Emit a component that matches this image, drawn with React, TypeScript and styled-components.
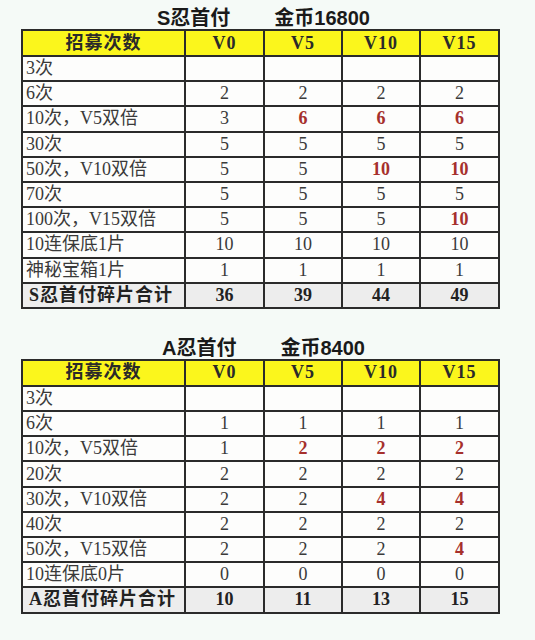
import styled, { createGlobalStyle } from "styled-components";

interface Row {
  label: string;
  values: string[];
  red?: number[];
}

interface Sheet {
  title: string;
  coins: string;
  rows: Row[];
  total: Row;
}

const levels = ["V0", "V5", "V10", "V15"];

const sheets: Sheet[] = [
  {
    title: "S忍首付",
    coins: "金币16800",
    rows: [
      { label: "3次", values: ["", "", "", ""] },
      { label: "6次", values: ["2", "2", "2", "2"] },
      { label: "10次，V5双倍", values: ["3", "6", "6", "6"], red: [1, 2, 3] },
      { label: "30次", values: ["5", "5", "5", "5"] },
      { label: "50次，V10双倍", values: ["5", "5", "10", "10"], red: [2, 3] },
      { label: "70次", values: ["5", "5", "5", "5"] },
      { label: "100次，V15双倍", values: ["5", "5", "5", "10"], red: [3] },
      { label: "10连保底1片", values: ["10", "10", "10", "10"] },
      { label: "神秘宝箱1片", values: ["1", "1", "1", "1"] }
    ],
    total: { label: "S忍首付碎片合计", values: ["36", "39", "44", "49"] }
  },
  {
    title: "A忍首付",
    coins: "金币8400",
    rows: [
      { label: "3次", values: ["", "", "", ""] },
      { label: "6次", values: ["1", "1", "1", "1"] },
      { label: "10次，V5双倍", values: ["1", "2", "2", "2"], red: [1, 2, 3] },
      { label: "20次", values: ["2", "2", "2", "2"] },
      { label: "30次，V10双倍", values: ["2", "2", "4", "4"], red: [2, 3] },
      { label: "40次", values: ["2", "2", "2", "2"] },
      { label: "50次，V15双倍", values: ["2", "2", "2", "4"], red: [3] },
      { label: "10连保底0片", values: ["0", "0", "0", "0"] }
    ],
    total: { label: "A忍首付碎片合计", values: ["10", "11", "13", "15"] }
  }
];

const App = () => {
  return (
    <>
      <GlobalStyle />
      <Page>
        {sheets.map((sheet) => (
          <Section key={sheet.title}>
            <Title>
              <span>{sheet.title}</span>
              <span>{sheet.coins}</span>
            </Title>
            <Table>
              <colgroup>
                <col style={{ width: 163 }} />
                <col style={{ width: 79 }} />
                <col style={{ width: 78 }} />
                <col style={{ width: 78 }} />
                <col style={{ width: 79 }} />
              </colgroup>
              <thead>
                <tr>
                  <HeadCell>招募次数</HeadCell>
                  {levels.map((lv) => (
                    <HeadCell key={lv}>{lv}</HeadCell>
                  ))}
                </tr>
              </thead>
              <tbody>
                {sheet.rows.map((row) => (
                  <tr key={row.label}>
                    <LabelCell>{row.label}</LabelCell>
                    {row.values.map((v, i) => (
                      <ValueCell key={i} $red={row.red?.includes(i)}>
                        {v}
                      </ValueCell>
                    ))}
                  </tr>
                ))}
                <tr>
                  <TotalLabel>{sheet.total.label}</TotalLabel>
                  {sheet.total.values.map((v, i) => (
                    <TotalCell key={i}>{v}</TotalCell>
                  ))}
                </tr>
              </tbody>
            </Table>
          </Section>
        ))}
      </Page>
    </>
  );
};

export default App;

const GlobalStyle = createGlobalStyle`
  html, body {
    margin: 0;
    background: #f5faf7;
  }
  body {
    font-family: "Liberation Serif", "Noto Sans CJK SC", serif;
    color: #333;
  }
`;

const Page = styled.div`
  width: 477px;
  padding: 4px 0 0 21px;
  display: flex;
  flex-direction: column;
  gap: 25px;
`;

const Section = styled.div`
  display: flex;
  flex-direction: column;
`;

const Title = styled.div`
  height: 25px;
  display: flex;
  justify-content: center;
  align-items: center;
  gap: 44px;
  padding-left: 8px;
  font-family: "Liberation Sans", "Noto Sans CJK SC", sans-serif;
  font-size: 20px;
  font-weight: 700;
  color: #1a1a1a;
`;

const Table = styled.table`
  width: 477px;
  table-layout: fixed;
  border-collapse: collapse;
  border: 2px solid #2b2b2b;
  background: #fdfdfc;
  font-size: 18px;

  td,
  th {
    border: 2px solid #2b2b2b;
    height: 23.2px;
    padding: 0;
    line-height: 21px;
    white-space: nowrap;
    overflow: hidden;
  }
`;

const HeadCell = styled.th`
  background: #fbf61c;
  font-weight: 700;
  color: #2a2a2a;
  text-align: center;
  letter-spacing: 1px;
  &&& {
    height: 24px;
  }
`;

const LabelCell = styled.td`
  text-align: left;
  &&& {
    padding-left: 3px;
  }
  color: #3a3a3a;
`;

const ValueCell = styled.td<{ $red?: boolean }>`
  text-align: center;
  color: ${(p) => (p.$red ? "#a6302c" : "#3a3a3a")};
  font-weight: ${(p) => (p.$red ? 700 : 400)};
`;

const TotalLabel = styled.td`
  background: #ededed;
  font-weight: 700;
  color: #222;
  letter-spacing: 1px;
  &&& {
    padding-left: 6px;
  }
`;

const TotalCell = styled.td`
  background: #ededed;
  font-weight: 700;
  color: #222;
  text-align: center;
`;
